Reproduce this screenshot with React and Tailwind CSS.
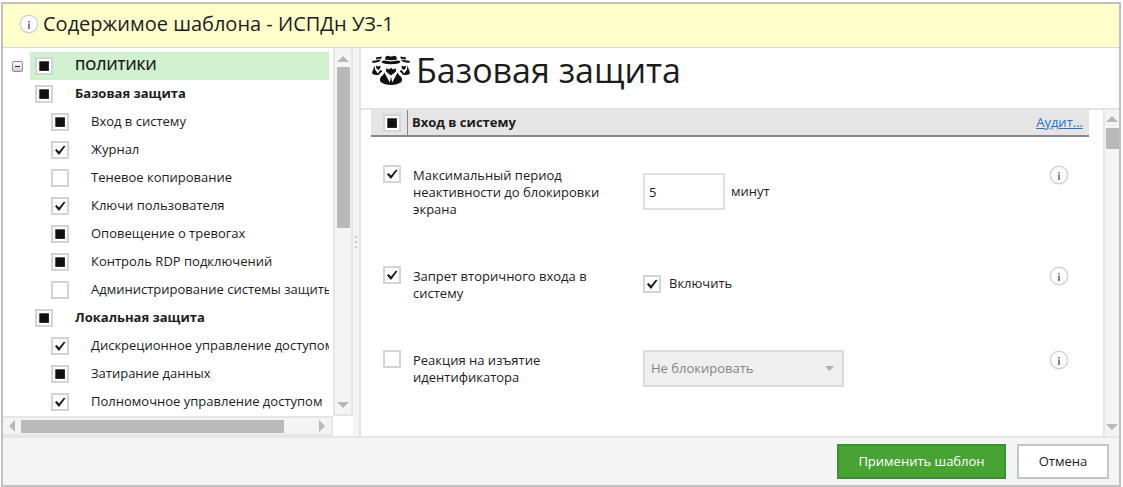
import { useEffect, useRef, useState } from "react";

const TREE = [
  { label: "ПОЛИТИКИ", level: 0, state: "mixed" },
  { label: "Базовая защита", level: 1, state: "mixed" },
  { label: "Вход в систему", level: 2, state: "mixed" },
  { label: "Журнал", level: 2, state: "on" },
  { label: "Теневое копирование", level: 2, state: "off" },
  { label: "Ключи пользователя", level: 2, state: "on" },
  { label: "Оповещение о тревогах", level: 2, state: "mixed" },
  { label: "Контроль RDP подключений", level: 2, state: "mixed" },
  { label: "Администрирование системы защиты", level: 2, state: "off" },
  { label: "Локальная защита", level: 1, state: "mixed" },
  { label: "Дискреционное управление доступом", level: 2, state: "on" },
  { label: "Затирание данных", level: 2, state: "mixed" },
  { label: "Полномочное управление доступом", level: 2, state: "on" },
];

function TriCheckbox({ id, initial, label }) {
  const ref = useRef(null);
  const [state, setState] = useState(initial);
  useEffect(() => {
    ref.current.indeterminate = state === "mixed";
  }, [state]);
  return (
    <span className="grid size-[18px] shrink-0">
      <input
        ref={ref}
        id={id}
        type="checkbox"
        aria-label={label}
        checked={state === "on"}
        onChange={() => setState(state === "on" ? "off" : "on")}
        className="col-start-1 row-start-1 size-[18px] appearance-none border-2 border-[#cfd6db] bg-white"
      />
      <svg viewBox="0 0 18 18" className="pointer-events-none col-start-1 row-start-1 size-[18px]">
        {state === "mixed" && <rect x="4.3" y="4.3" width="9.6" height="9.6" fill="#111" />}
        {state === "on" && (
          <path d="M4 9.3 L5.6 8 L8 10.4 L12.8 4.8 L14.6 5 L8.4 13.4 L7.4 13.4Z" fill="#1a1a1a" />
        )}
      </svg>
    </span>
  );
}

function InfoIcon() {
  return (
    <svg viewBox="0 0 20 20" className="size-5 shrink-0">
      <circle cx="10" cy="10" r="8.7" fill="#fff" stroke="#cdd3da" strokeWidth="1.4" />
      <rect x="9.3" y="7" width="1.4" height="1.4" fill="#6b3f6b" />
      <rect x="9.3" y="9.4" width="1.4" height="5.6" fill="#6b3f6b" />
    </svg>
  );
}

function SideAgent() {
  return (
    <>
      <path d="M5.2 3.6 Q6 2.6 7.2 3.2 L10.2 2.4 Q11 3 10.4 4.6 L5 5.6Z" />
      <path d="M1 7.4 Q2.4 6.4 4.6 6.6 L10 5.6 Q9.6 7.4 7.2 8 Q3.6 9 1.2 8.4Z" />
      <path d="M5 11.4 L7.4 12.4 L9.6 11.4 L9.2 14.2 L7.4 16 L5.4 14.6Z" />
      <path d="M3.6 11.2 L4 15.4 L6.8 19.4 L9.6 15.8 L11.4 17.4 Q9 18.6 8 20.8 Q4.4 21.6 1.4 20 Q0.8 17.6 2.2 15.6Z" />
    </>
  );
}

function AgentsIcon() {
  return (
    <svg viewBox="0 0 40 32" className="h-8 w-10 shrink-0" fill="#111">
      <path d="M14 5.6 C14.2 3 15 1.8 16.6 1.8 C18 1.8 18.8 2.6 20 2.6 C21.2 2.6 22 1.8 23.4 1.8 C25 1.8 25.8 3 26 5.6 Q20 7 14 5.6Z" />
      <path d="M13.4 6.6 Q20 8.2 26.6 6.6 Q29.6 7 29.6 8 Q27.6 10.2 20 10.2 Q12.4 10.2 10.4 8 Q10.4 7 13.4 6.6Z" />
      <SideAgent />
      <g transform="translate(40 0) scale(-1 1)">
        <SideAgent />
      </g>
      <path d="M15 14.2 L18 15.4 L20 13.8 L22 15.4 L25 14.2 L24.8 17.8 L20 21.6 L15.2 17.8Z" />
      <path d="M13.4 18.4 L18.8 28.6 L20 22.8 L21.2 28.6 L26.6 18.4 Q27.2 20.6 30 22.8 Q32 25.6 30.4 28 Q26.4 31 20 31 Q13.6 31 9.6 28 Q8 25.6 10 22.8 Q12.8 20.6 13.4 18.4Z" />
    </svg>
  );
}

function Arrow({ direction }) {
  const paths = {
    up: "M0 6 L6 0 L12 6Z",
    down: "M0 0 L6 6 L12 0Z",
    left: "M6 0 L0 6 L6 12Z",
    right: "M0 0 L6 6 L0 12Z",
  };
  const vertical = direction === "up" || direction === "down";
  return (
    <svg
      viewBox={vertical ? "0 0 12 6" : "0 0 6 12"}
      className={vertical ? "h-[6px] w-3 shrink-0" : "h-3 w-[6px] shrink-0"}
      fill="#b8b8b8"
    >
      <path d={paths[direction]} />
    </svg>
  );
}

function SettingRow({ id, label, state, children }) {
  return (
    <div className="flex items-start pt-7 pb-5 pl-3 pr-5">
      <TriCheckbox id={id} initial={state} />
      <label htmlFor={id} className="ml-3 w-[200px] shrink-0 pt-0.5 leading-[17px]">
        {label}
      </label>
      <div className="ml-[30px] flex flex-1 items-center self-center">{children}</div>
      <button type="button" aria-label="Справка">
        <InfoIcon />
      </button>
    </div>
  );
}

export default function App() {
  return (
    <div className="h-screen bg-white pl-px pr-0.5 pt-0.5 font-['Open_Sans','Noto_Sans',sans-serif] text-[13px] text-[#1c1c1c]">
      <div className="flex h-full flex-col border-2 border-[#bfc0c0]">
        <header className="flex h-11 shrink-0 items-center gap-1 border-b border-[#d9d9d9] bg-[#ffffcc] pb-1 pl-4">
          <InfoIcon />
          <h1 className="text-[20px] leading-6">Содержимое шаблона - ИСПДн УЗ-1</h1>
        </header>

        <div className="flex min-h-0 flex-1">
          <aside className="flex w-[350px] shrink-0 flex-col">
            <div className="flex min-h-0 flex-1">
              <ul className="min-w-0 flex-1 overflow-hidden pt-1 pl-[9px] pr-1">
                {TREE.map((item, i) => (
                  <li key={item.label} className="flex h-7 items-center overflow-hidden">
                    <span className="w-[18px] shrink-0">
                      {item.level === 0 && (
                        <button
                          type="button"
                          aria-label="Свернуть"
                          className="flex size-[11px] items-center justify-center rounded-xs border border-[#8c8c8c] bg-linear-to-b from-white to-[#cfcfcf]"
                        >
                          <span className="h-px w-[5px] bg-[#222]" />
                        </button>
                      )}
                    </span>
                    <span
                      className={
                        "flex h-7 min-w-0 flex-1 items-center overflow-hidden " +
                        (item.level === 0 ? "bg-[#d0f0d0] " : "") +
                        (item.level === 2 ? "pl-[21px]" : "pl-[5px]")
                      }
                    >
                      <TriCheckbox id={"node-" + i} initial={item.state} />
                      <label
                        htmlFor={"node-" + i}
                        className={
                          "ml-[22px] pb-[3px] leading-5 whitespace-nowrap " +
                          (item.level === 0 ? "text-sm font-semibold" : item.level === 1 ? "font-bold" : "")
                        }
                      >
                        {item.label}
                      </label>
                    </span>
                  </li>
                ))}
              </ul>
              <div className="flex w-5 shrink-0 flex-col items-center border-2 border-t-0 border-[#e6e6e6] bg-[#f4f4f4] pt-2 pb-[6px]">
                <Arrow direction="up" />
                <div className="flex w-full flex-1 flex-col items-center pt-[5px]">
                  <div className="h-[48%] w-[13px] bg-[#b9b9b9]" />
                </div>
                <Arrow direction="down" />
              </div>
            </div>
            <div className="mr-5 flex h-5 items-center border-2 border-l-0 border-[#e6e6e6] bg-[#f4f4f4] pl-[6px] pr-[6px]">
              <Arrow direction="left" />
              <div className="flex-1 px-[6px]">
                <div className="h-[13px] w-[90%] bg-[#b9b9b9]" />
              </div>
              <Arrow direction="right" />
            </div>
          </aside>

          <div className="flex w-2 shrink-0 flex-col items-center justify-center gap-[3px] border-r-2 border-[#e3e3e3] bg-[#f4f4f4]">
            <span className="size-0.5 bg-[#c8c8c8]" />
            <span className="size-0.5 bg-[#c8c8c8]" />
            <span className="size-0.5 bg-[#c8c8c8]" />
          </div>

          <main className="flex min-w-0 flex-1 flex-col">
            <div className="flex h-[62px] shrink-0 items-start gap-[5px] border-b-2 border-[#e3e3e3] pl-[10px] pt-[6px]">
              <AgentsIcon />
              <h2 className="text-[34px] leading-8">Базовая защита</h2>
            </div>
            <div className="flex min-h-0 flex-1">
              <section className="min-w-0 flex-1 overflow-hidden pl-[10px] pr-[14px]">
                <div className="flex h-[27px] items-stretch border-b-2 border-[#85878c] bg-[#e5e5e5]">
                  <span className="flex w-[37px] items-center border-r border-[#85878c] pl-3">
                    <TriCheckbox id="section" initial="mixed" />
                  </span>
                  <label htmlFor="section" className="flex flex-1 items-center pl-1 font-bold">
                    Вход в систему
                  </label>
                  <a href="#audit" className="self-center pr-[6px] text-[#2474cf] underline">
                    Аудит...
                  </a>
                </div>

                <SettingRow id="idle" label="Максимальный период неактивности до блокировки экрана" state="on">
                  <input
                    type="text"
                    id="minutes"
                    defaultValue="5"
                    className="h-[37px] w-[82px] border-2 border-[#e0e0e0] bg-white px-1"
                  />
                  <label htmlFor="minutes" className="ml-[6px]">
                    минут
                  </label>
                </SettingRow>

                <SettingRow id="second" label="Запрет вторичного входа в систему" state="on">
                  <TriCheckbox id="enable" initial="on" />
                  <label htmlFor="enable" className="ml-2">
                    Включить
                  </label>
                </SettingRow>

                <SettingRow id="token" label="Реакция на изъятие идентификатора" state="off">
                  <div className="grid w-[201px] items-center">
                    <select
                      disabled
                      aria-label="Реакция на изъятие идентификатора"
                      className="col-start-1 row-start-1 h-[37px] appearance-none border-2 border-[#dcdcdc] bg-[#efefef] pl-[6px] text-[#858585] opacity-100"
                    >
                      <option>Не блокировать</option>
                    </select>
                    <svg
                      viewBox="0 0 9 5"
                      className="pointer-events-none col-start-1 row-start-1 mr-[10px] h-[5px] w-[9px] justify-self-end"
                      fill="#b0b0b0"
                    >
                      <path d="M0 0 L4.5 5 L9 0Z" />
                    </svg>
                  </div>
                </SettingRow>
              </section>
              <div className="flex w-4 shrink-0 flex-col items-center border-l-2 border-[#e6e6e6] bg-[#f4f4f4] pt-[6px] pb-[6px]">
                <Arrow direction="up" />
                <div className="flex w-full flex-1 flex-col items-end pt-[6px]">
                  <div className="h-[7%] w-[13px] bg-[#b9b9b9]" />
                </div>
                <Arrow direction="down" />
              </div>
            </div>
          </main>
        </div>

        <footer className="flex shrink-0 items-center justify-end gap-[11px] border-t-2 border-[#e6e6e6] bg-[#f4f4f4] py-[6px] pr-[10px]">
          <button type="button" className="h-[35px] w-[169px] border-2 border-[#3b8f35] bg-[#47a433] text-white">
            Применить шаблон
          </button>
          <button type="button" className="h-[35px] w-[92px] border-2 border-[#bfc6cd] bg-white">
            Отмена
          </button>
        </footer>
      </div>
    </div>
  );
}
